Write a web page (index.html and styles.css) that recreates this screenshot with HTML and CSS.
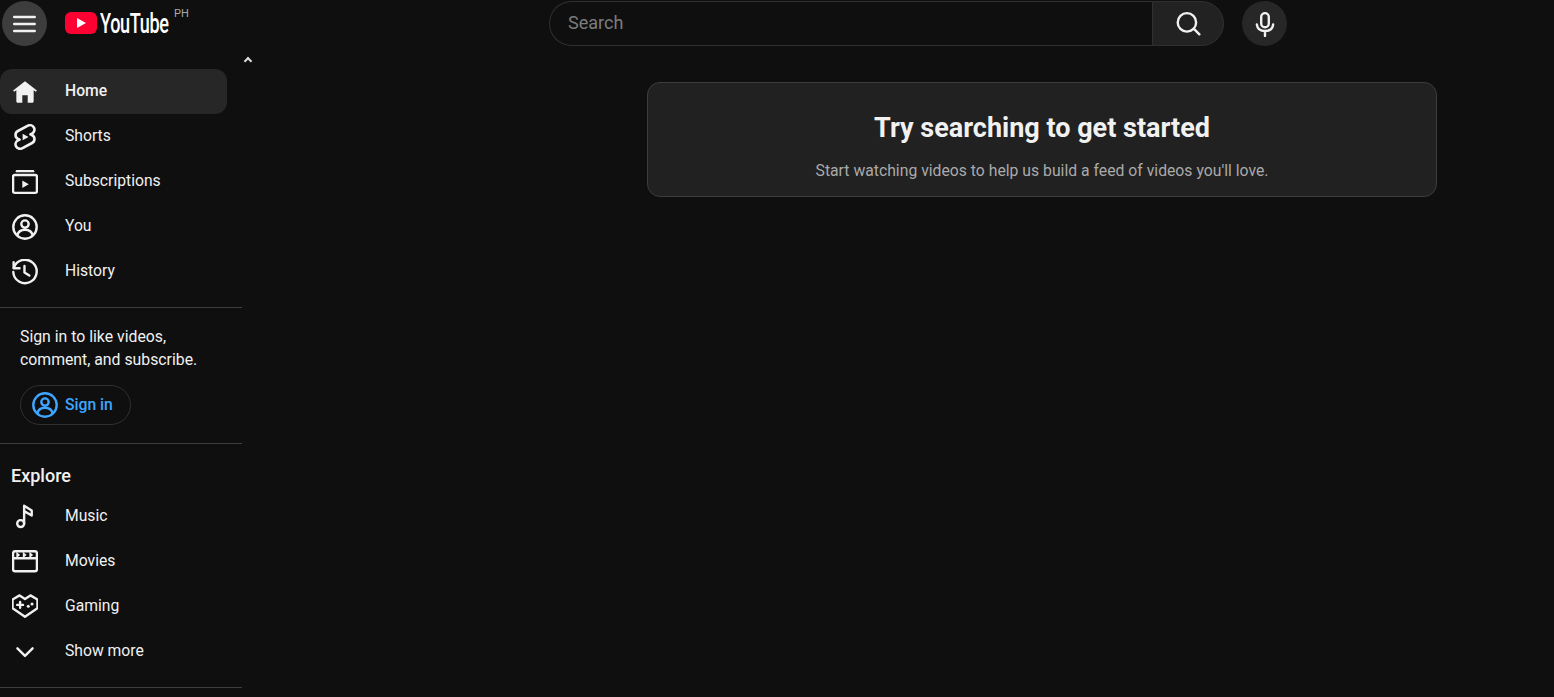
FILE: index.html
```html
<!DOCTYPE html>
<html lang="en">
<head>
<meta charset="utf-8">
<title>YouTube</title>
<link rel="stylesheet" href="styles.css">
</head>
<body>
<header class="topbar">
	<div class="start">
		<button class="menu-btn" aria-label="Guide">
			<svg class="icon" viewBox="0 0 24 24"><path class="line" d="M2 5.500h19M2 12h19M2 18.500h19"/></svg>
		</button>
		<a class="logo">
			<span class="logo-mark"><span class="logo-play"></span></span>
			<span class="logo-word"><span class="logo-text">YouTube</span></span>
			<span class="logo-country">PH</span>
		</a>
	</div>
	<div class="search">
		<div class="search-input">Search</div>
		<button class="search-btn" aria-label="Search">
			<svg class="icon" viewBox="0 0 24 24"><circle class="line" cx="11" cy="10.500" r="8.500"/><path class="line" d="M17.500 16.500l5 5"/></svg>
		</button>
	</div>
	<button class="mic-btn" aria-label="Search with your voice">
		<svg class="icon" viewBox="0 0 24 24"><rect class="line" x="8.500" y="2" width="7" height="13" rx="3.500"/><path class="line" d="M4.500 12.500c.5 4 3.500 6 7.500 6s7-2 7.500-6M12 18.500V23"/></svg>
	</button>
</header>

<div class="page">
	<nav class="guide">
		<span class="guide-up"></span>
		<section class="guide-section first">
			<a class="item active">
				<svg class="icon" viewBox="0 0 24 24"><path class="fill" d="M12 2 1 10.600l1 1.200L4 10.400V20.500c0 .8.700 1.500 1.500 1.500H9.500v-7h5v7h4c.8 0 1.500-.7 1.500-1.500V10.400l2 1.400 1-1.200z"/></svg>
				<span>Home</span>
			</a>
			<a class="item">
				<svg class="icon" viewBox="1 1 22 22"><path class="line" d="M17.770 10.320c-.77-.32-1.200-.5-1.200-.5L18 9.060c1.840-.96 2.530-3.230 1.560-5.060s-3.240-2.530-5.070-1.560L6 6.940c-1.290.68-2.070 2.040-2 3.490.07 1.420.93 2.670 2.220 3.250.03.01 1.200.5 1.200.5L6 14.930c-1.830.97-2.530 3.240-1.560 5.070.97 1.830 3.240 2.530 5.070 1.560l8.500-4.500c1.290-.68 2.060-2.040 1.990-3.490-.07-1.420-.94-2.680-2.230-3.250z"/><path class="fill" d="M10 14.650v-5.300L15 12z"/></svg>
				<span>Shorts</span>
			</a>
			<a class="item">
				<svg class="icon" viewBox="0 0 24 24"><path class="line" d="M4.500 2h15"/><rect class="line" x="1" y="5.500" width="22" height="16.500" rx="1.500"/><path class="fill" d="M9.500 10.500v7l6-3.500z"/></svg>
				<span>Subscriptions</span>
			</a>
			<a class="item">
				<svg class="icon" viewBox="0 0 24 24"><circle class="line" cx="12" cy="12" r="10.800"/><circle class="line" cx="12" cy="9.300" r="3.400"/><path class="line" d="M5 19.500c.8-3.300 3.600-5 7-5s6.200 1.700 7 5"/></svg>
				<span>You</span>
			</a>
			<a class="item">
				<svg class="icon" viewBox="0 0 24 24"><path class="line" d="M1.500 3v5.500H7"/><path class="line" d="M1.700 8.200A10.800 10.800 0 1 1 1.200 12"/><path class="line" d="M11.500 6.500v6l4.500 2.800"/></svg>
				<span>History</span>
			</a>
		</section>

		<section class="guide-section signin">
			<p>Sign in to like videos, comment, and subscribe.</p>
			<a class="signin-btn">
				<svg class="icon" viewBox="0 0 24 24"><circle class="line blue" cx="12" cy="12" r="10.800"/><circle class="line blue" cx="12" cy="9.300" r="3.400"/><path class="line blue" d="M5 19.500c.8-3.300 3.600-5 7-5s6.200 1.700 7 5"/></svg>
				<span>Sign in</span>
			</a>
		</section>

		<section class="guide-section explore">
			<h3>Explore</h3>
			<a class="item">
				<svg class="icon" viewBox="0 0 24 24"><circle class="line" cx="8" cy="19" r="3.200"/><path class="line" d="M11.200 19V2.500l7 4.500v4.500l-7-4"/></svg>
				<span>Music</span>
			</a>
			<a class="item">
				<svg class="icon" viewBox="0 0 24 24"><rect class="line" x="1" y="3" width="22" height="18.500" rx="1.800"/><path class="line" d="M1 9.500h22"/><path class="fill" d="M4 3.500l3.500 3-3.500 3zM10 3.500l3.500 3-3.500 3zM16 3.500l3.500 3-3.500 3z"/></svg>
				<span>Movies</span>
			</a>
			<a class="item">
				<svg class="icon" viewBox="0 0 24 24"><path class="line" d="M12 5.500 7 2.200 .5 6v8L12 22l11.500-8V6L17 2.200z"/><path class="line" d="M4.800 11h5.400M7.500 8.300v5.400"/><circle class="fill" cx="15" cy="12.300" r="1.400"/><circle class="fill" cx="18.500" cy="10.200" r="1.400"/></svg>
				<span>Gaming</span>
			</a>
			<a class="item">
				<svg class="icon" viewBox="0 0 24 24"><path class="line" d="M5 9.500l7 7 7-7"/></svg>
				<span>Show more</span>
			</a>
		</section>
	</nav>

	<main class="content">
		<div class="prompt">
			<h2>Try searching to get started</h2>
			<p>Start watching videos to help us build a feed of videos you'll love.</p>
		</div>
	</main>
</div>
</body>
</html>
```

FILE: styles.css
```css
*{ margin:0; padding:0; box-sizing:border-box;}
html,body{ height:100%; overflow:hidden;}
body{ background:#0f0f0f; color:#f1f1f1; font-family:Roboto,"Liberation Sans",sans-serif; font-size:15.700px;}
button{ border:0; color:inherit; font:inherit; display:flex; align-items:center; justify-content:center;}

.icon{ width:26px; height:26px; flex:none; display:block;}
.line{ fill:none; stroke:#f1f1f1; stroke-width:2.200; stroke-linejoin:round; stroke-linecap:round;}
.line.blue{ stroke:#3ea6ff;}
.fill{ fill:#f1f1f1;}

.topbar{ height:46px; display:flex; align-items:flex-start; padding-top:1px;}
.start{ width:549px; flex:none; display:flex; padding-left:2px;}
.menu-btn{ width:45px; height:45px; border-radius:50%; background:#3d3d3d;}
.logo{ display:flex; align-items:flex-start; margin-left:18px;}
.logo-mark{ width:32px; height:22px; margin-top:11px; background:#ff0033; border-radius:6px; display:flex; align-items:center; justify-content:center;}
.logo-play{ border-left:9px solid #fff; border-top:5px solid transparent; border-bottom:5px solid transparent;}
.logo-word{ width:70px; margin:7px 0 0 3px; height:32px; white-space:nowrap;}
.logo-text{ display:inline-block; font-size:27px; line-height:32px; font-weight:500; letter-spacing:-.5px; transform:scaleX(.67); transform-origin:0 0; color:#fff;}
.logo-country{ font-size:11px; color:#aaa; margin:6px 0 0 4px;}

.search{ width:675px; height:45px; flex:none; display:flex;}
.search-input{ flex:1; border:1px solid #303030; border-right:0; border-radius:23px 0 0 23px; padding-left:18px; line-height:42px; font-size:18px; color:#7c7c7c;}
.search-btn{ width:72px; height:45px; flex:none; background:#222; border:1px solid #303030; border-radius:0 23px 23px 0;}
.mic-btn{ width:45px; height:45px; margin-left:18px; border-radius:50%; background:#272727;}

.page{ display:flex;}
.guide{ width:242px; flex:none; position:relative;}
.guide-up{ position:absolute; left:245px; top:12px; width:6px; height:6px; border-left:2px solid #ddd; border-top:2px solid #ddd; transform:rotate(45deg);}
.guide-section{ border-bottom:1px solid #3d3d3d; padding-bottom:14px; margin-bottom:-1px;}
.guide-section.first{ padding-top:23px; padding-bottom:13px;}
.guide-section + .guide-section{ margin-top:1px;}

.item{ height:45px; width:227px; display:flex; align-items:center; padding-left:12px; border-radius:12px;}
.item span{ margin-left:27px; padding-bottom:2px;}
.item.active{ background:#272727; font-weight:500;}
.explore .item span{ padding-bottom:0;}

.signin{ padding:17px 20px 18px;}
.signin p{ line-height:23px; width:190px; font-size:15.800px;}
.signin-btn{ width:111px; height:40px; margin-top:14px; display:flex; align-items:center; gap:7px; padding-left:11px; border:1px solid #303030; border-radius:20px; color:#3ea6ff; font-weight:500;}
.signin-btn span{ padding-bottom:2px;}

h3{ font-size:18px; font-weight:500; line-height:24px; padding:20px 0 5px 11px;}

.content{ flex:1;}
.prompt{ width:790px; height:115px; margin:36px 0 0 405px; background:#212121; border:1px solid #3d3d3d; border-radius:13px; text-align:center; padding-top:27px;}
.prompt h2{ font-size:27px; font-weight:700; line-height:36px;}
.prompt p{ margin-top:14px; font-size:15.750px; line-height:22px; color:#aaa;}
```
